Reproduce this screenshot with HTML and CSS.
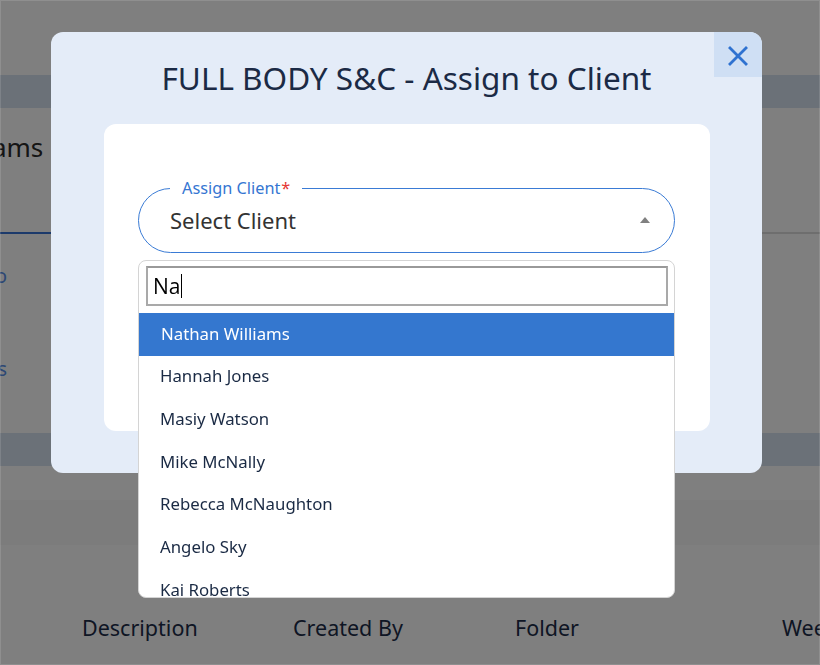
FILE: index.html
```html
<!DOCTYPE html>
<html lang="en">
<head>
<meta charset="utf-8">
<title>Programs</title>
<link rel="stylesheet" href="styles.css">
</head>
<body>
  <div class="page">
    <header class="topbar"></header>
    <div class="band"></div>
    <div class="title-row"><h1 class="page-title">Programs</h1></div>
    <nav class="tabs"><span class="tab tab-active"></span></nav>
    <div class="content">
      <aside class="side">
        <a class="side-link">Info</a>
        <a class="side-link">Sessions</a>
      </aside>
    </div>
    <div class="band"></div>
    <div class="spacer"></div>
    <div class="filter-row"></div>
    <div class="table-head">
      <span>Description</span>
      <span>Created By</span>
      <span>Folder</span>
      <span>Weeks</span>
    </div>
  </div>

  <div class="overlay">
    <div class="modal">
      <button class="close" aria-label="Close">
        <svg width="20" height="20" viewBox="0 0 20 20" fill="none" stroke="#2f72d0" stroke-width="2.8" stroke-linecap="square">
          <path d="M2 2 L18 18 M18 2 L2 18"/>
        </svg>
      </button>
      <h2 class="modal-title">FULL BODY S&amp;C - Assign to Client</h2>
      <div class="card">
        <fieldset class="field">
          <legend class="field-label">Assign Client<span class="req">*</span></legend>
          <div class="select">
            <span class="select-value">Select Client</span>
            <span class="caret"></span>
          </div>
        </fieldset>
        <div class="dropdown">
          <div class="search">Na<span class="cursor"></span></div>
          <ul class="options">
            <li class="option option-active">Nathan Williams</li>
            <li class="option">Hannah Jones</li>
            <li class="option">Masiy Watson</li>
            <li class="option">Mike McNally</li>
            <li class="option">Rebecca McNaughton</li>
            <li class="option">Angelo Sky</li>
            <li class="option">Kai Roberts</li>
          </ul>
        </div>
      </div>
    </div>
  </div>
</body>
</html>
```

FILE: styles.css
```css
* { box-sizing: border-box; }

html, body {
  margin: 0;
  width: 820px;
  height: 665px;
  overflow: hidden;
  background: #fff;
  font-family: "Noto Sans", "Open Sans", sans-serif;
}

/* ---------- page behind the dialog ---------- */
.page {
  display: flex;
  flex-direction: column;
  color: #1c2c48;
}

.topbar { height: 75px; }

.band {
  height: 33px;
  background: #d6e2f0;
}

.title-row {
  height: 92px;
  padding-top: 23px;
}

.page-title {
  margin: 0 0 0 -76px;
  font-size: 26px;
  line-height: 32px;
  font-weight: 400;
  color: #2a2a2a;
}

.tabs {
  height: 34px;
  display: flex;
  align-items: flex-end;
  border-bottom: 2px solid #dcdcdc;
}

.tab {
  width: 140px;
  height: 2px;
  margin-left: -60px;
  margin-bottom: -2px;
}

.tab-active { background: #3875d7; }

.content { height: 199px; }

.side {
  width: 100px;
  margin-left: -93px;
  padding-top: 30px;
  display: flex;
  flex-direction: column;
  gap: 69px;
  text-align: right;
}

.side-link {
  font-size: 20px;
  line-height: 24px;
  color: #5a8fe8;
}

.spacer { height: 34px; }

.filter-row {
  height: 45px;
  background: #f8f8f8;
}

.table-head {
  display: grid;
  grid-template-columns: 211px 222px 267px 1fr;
  padding: 70px 0 0 82px;
  font-size: 21.5px;
  line-height: 26px;
  color: #1c2c48;
  white-space: nowrap;
}

/* ---------- dialog ---------- */
.overlay {
  position: fixed;
  inset: 0;
  background: rgba(0, 0, 0, 0.5);
  box-shadow: inset 0 0 0 1px rgba(255, 255, 255, 0.12);
  display: flex;
  align-items: flex-start;
  padding: 32px 0 0 51px;
}

.modal {
  position: relative;
  width: 711px;
  height: 441px;
  background: #e4ecf8;
  border-radius: 12px;
  display: flex;
  flex-direction: column;
}

.close {
  position: absolute;
  top: 0;
  right: 0;
  width: 48px;
  height: 45px;
  border: 0;
  padding: 2px 0 0;
  background: #cfdff4;
  border-radius: 0 12px 0 0;
  display: flex;
  align-items: center;
  justify-content: center;
}

.modal-title {
  margin: 0;
  height: 92px;
  display: flex;
  align-items: center;
  justify-content: center;
  padding-bottom: 2px;
  font-size: 31.5px;
  font-weight: 400;
  color: #1b2a45;
}

.card {
  position: relative;
  margin: 0 52px 0 53px;
  height: 307px;
  background: #fff;
  border-radius: 12px;
  padding: 54px 35px 0 34px;
}

.field {
  margin: 0;
  padding: 0 24px 0 31px;
  min-width: 0;
  border: 1.5px solid #3a7bd5;
  border-radius: 33px;
}

.field-label {
  padding: 0 12px;
  font-size: 16.3px;
  line-height: 20px;
  color: #3576d2;
}

.req {
  color: #e53935;
  margin-left: 1px;
}

.select {
  height: 54px;
  padding-bottom: 11px;
  display: flex;
  align-items: center;
  justify-content: space-between;
}

.select-value {
  font-size: 22px;
  color: #333;
}

.caret {
  width: 0;
  height: 0;
  border-left: 5px solid transparent;
  border-right: 5px solid transparent;
  border-bottom: 6px solid #808080;
  margin-top: 1px;
}

.dropdown {
  position: absolute;
  top: 136px;
  left: 34px;
  width: 537px;
  height: 338px;
  background: #fff;
  border: 1px solid #d4d4d4;
  border-radius: 8px;
  padding: 5px 6px 0 7px;
  overflow: hidden;
  display: flex;
  flex-direction: column;
  gap: 7px;
}

.search {
  flex: none;
  height: 40px;
  border: 2px solid #a9a9a9;
  border-top-color: #999;
  padding: 0 5px;
  display: flex;
  align-items: center;
  font-family: "Open Sans", "Noto Sans", sans-serif;
  font-size: 21px;
  color: #000;
}

.cursor {
  width: 1px;
  height: 24px;
  background: #000;
  margin-left: 1px;
}

.options {
  list-style: none;
  margin: 0 -6px 0 -7px;
  padding: 0;
}

.option {
  height: 42.67px;
  display: flex;
  align-items: center;
  padding-left: 21px;
  padding-bottom: 2px;
  font-size: 16.8px;
  color: #1a2a44;
}

.option-active {
  background: #3477cf;
  color: #fff;
  padding-left: 22px;
}
```
